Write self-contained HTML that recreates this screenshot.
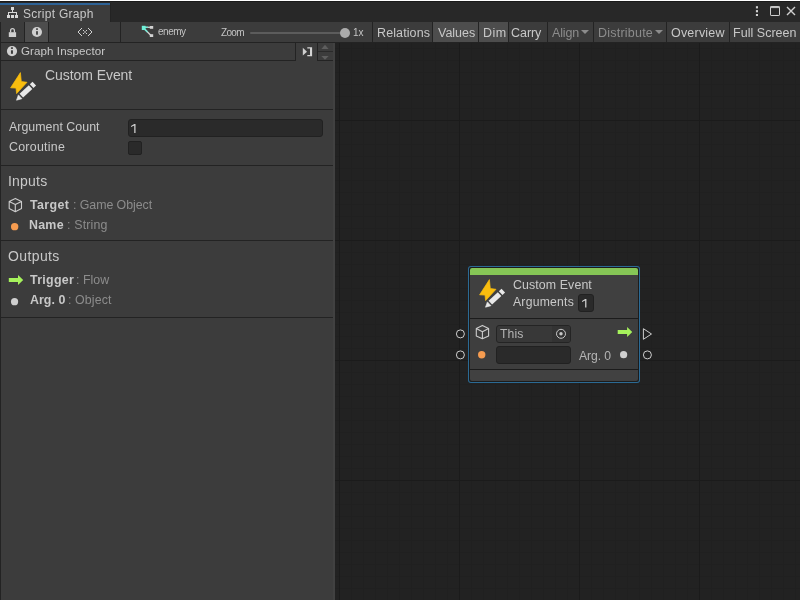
<!DOCTYPE html>
<html><head><meta charset="utf-8">
<style>
*{margin:0;padding:0;box-sizing:border-box}
html,body{width:800px;height:600px;overflow:hidden;background:#282828;font-family:"Liberation Sans",sans-serif;color:#c4c4c4}
.a{position:absolute}
.t{position:absolute;white-space:pre;line-height:1;font-family:"Liberation Sans",sans-serif;will-change:transform}
svg{position:absolute;overflow:visible}
</style></head><body>
<!-- top chrome -->
<div class="a" style="left:0;top:0;width:800px;height:1px;background:#fff"></div>
<div class="a" style="left:0;top:1px;width:800px;height:1px;background:#1a1a1a"></div>
<!-- tab -->
<div class="a" style="left:0;top:3px;width:110px;height:19px;background:#3c3c3c"></div>
<div class="a" style="left:0;top:3px;width:110px;height:2px;background:#2d6296"></div>
<div class="a" style="left:110px;top:3px;width:1px;height:19px;background:#232323"></div>
<svg style="left:0;top:0" width="24" height="22">
  <g fill="#d8d8d8">
    <rect x="11" y="7" width="3" height="3"/>
    <rect x="12" y="10" width="1" height="3"/>
    <rect x="8" y="12" width="9" height="1"/>
    <rect x="8" y="12" width="1" height="3"/>
    <rect x="16" y="12" width="1" height="3"/>
    <rect x="7" y="15" width="3" height="3"/>
    <rect x="11" y="15" width="3" height="3"/>
    <rect x="15" y="15" width="3" height="3"/>
  </g>
</svg>
<div class="t" id="tScript" style="left:22.50px;top:8px;font-size:12px;color:#c8c8c8;letter-spacing:0.273px">Script Graph</div>
<!-- window icons -->
<svg style="left:750px;top:0" width="50" height="22">
  <g fill="#d0d0d0">
    <rect x="5.9" y="6.2" width="2.1" height="2.2"/>
    <rect x="5.9" y="10.1" width="2.1" height="2.2"/>
    <rect x="5.9" y="14" width="2.1" height="2"/>
  </g>
  <rect x="20.5" y="6.5" width="9" height="9" rx="0.6" fill="none" stroke="#d0d0d0" stroke-width="1"/>
  <rect x="20.5" y="6.5" width="9" height="1.6" fill="#c0c0c0"/>
  <path d="M37 7 L45 15 M45 7 L37 15" stroke="#d0d0d0" stroke-width="1.4"/>
</svg>

<!-- toolbar -->
<div class="a" style="left:0;top:22px;width:800px;height:21px;background:#3c3c3c"></div>
<div class="a" style="left:0;top:42px;width:800px;height:1px;background:#232323"></div>
<div class="a" style="left:0;top:22px;width:1px;height:21px;background:#232323"></div>
<div class="a" style="left:24px;top:22px;width:1px;height:20px;background:#232323"></div>
<div class="a" style="left:25px;top:22px;width:23px;height:20px;background:#4d4d4d"></div>
<div class="a" style="left:48px;top:22px;width:1px;height:20px;background:#232323"></div>
<div class="a" style="left:120px;top:22px;width:1px;height:20px;background:#232323"></div>
<div class="a" style="left:372px;top:22px;width:1px;height:20px;background:#232323"></div>


<!-- toolbar icons -->
<svg style="left:0;top:22px" width="120" height="20">
  <path d="M10.6 10.4 V8.6 a1.9 1.9 0 0 1 3.8 0 V10.4" fill="none" stroke="#cfcfcf" stroke-width="1.3"/>
  <rect x="8.8" y="10.2" width="7.3" height="4.8" fill="#cfcfcf"/>
  <circle cx="36.95" cy="10" r="5.05" fill="#d0d0d0"/>
  <rect x="36.0" y="6.3" width="2" height="1.6" fill="#4d4d4d"/>
  <rect x="36.0" y="9.2" width="2" height="3.5" fill="#4d4d4d"/>
  <g fill="#d2d2d2"><rect x="81" y="6" width="1" height="1"/><rect x="80" y="7" width="1" height="1"/><rect x="79" y="8" width="1" height="1"/><rect x="78" y="9" width="1" height="1"/><rect x="78" y="10" width="1" height="1"/><rect x="79" y="11" width="1" height="1"/><rect x="80" y="12" width="1" height="1"/><rect x="81" y="13" width="1" height="1"/><rect x="88" y="6" width="1" height="1"/><rect x="89" y="7" width="1" height="1"/><rect x="90" y="8" width="1" height="1"/><rect x="91" y="9" width="1" height="1"/><rect x="91" y="10" width="1" height="1"/><rect x="90" y="11" width="1" height="1"/><rect x="89" y="12" width="1" height="1"/><rect x="88" y="13" width="1" height="1"/><rect x="83" y="8" width="1" height="1"/><rect x="86" y="8" width="1" height="1"/><rect x="83" y="11" width="1" height="1"/><rect x="86" y="11" width="1" height="1"/></g>
  <rect x="84.3" y="9.3" width="1.4" height="1.4" fill="#e0e0e0"/>
</svg>
<svg style="left:140px;top:22px" width="20" height="20">
  <path d="M4 5.3 H10" stroke="#cfcfcf" stroke-width="1.3"/>
  <path d="M4 5.3 H8" stroke="#6de8d2" stroke-width="1.3"/>
  <path d="M4.5 7 L11 13.5" stroke="#cfcfcf" stroke-width="1.4"/>
  <path d="M4.5 7 L7.5 10" stroke="#6de8d2" stroke-width="1.4"/>
  <rect x="1.8" y="3.8" width="3.8" height="4.2" fill="#6ff0d8"/>
  <rect x="9.8" y="4" width="3.4" height="2.8" fill="#d2d2d2"/>
  <rect x="9.8" y="12.2" width="3.4" height="2.8" fill="#d2d2d2"/>
</svg>
<div class="t" id="tEnemy" style="left:158.00px;top:27px;font-size:10px;color:#c4c4c4;letter-spacing:-0.475px">enemy</div>
<div class="t" id="tZoom" style="left:221.00px;top:28px;font-size:10px;color:#c4c4c4;letter-spacing:-0.667px">Zoom</div>
<div class="a" style="left:250px;top:32px;width:94px;height:2.4px;border-radius:2px;background:#5c5c5c"></div>
<div class="a" style="left:339.8px;top:28px;width:10px;height:10px;border-radius:50%;background:#ababab"></div>
<div class="t" id="t1x" style="left:353.00px;top:28px;font-size:10px;color:#c4c4c4;letter-spacing:0.000px">1x</div>
<!-- toolbar buttons right -->
<div class="a" style="left:433px;top:22px;width:45px;height:20px;background:#4d4d4d"></div>
<div class="a" style="left:479px;top:22px;width:29px;height:20px;background:#4d4d4d"></div>
<div class="a" style="left:432px;top:22px;width:1px;height:20px;background:#232323"></div>
<div class="a" style="left:478px;top:22px;width:1px;height:20px;background:#232323"></div>
<div class="a" style="left:508px;top:22px;width:1px;height:20px;background:#232323"></div>
<div class="a" style="left:547px;top:22px;width:1px;height:20px;background:#232323"></div>
<div class="a" style="left:593px;top:22px;width:1px;height:20px;background:#232323"></div>
<div class="a" style="left:666px;top:22px;width:1px;height:20px;background:#232323"></div>
<div class="a" style="left:729px;top:22px;width:1px;height:20px;background:#232323"></div>
<div class="t" id="tRel" style="left:376.80px;top:27px;font-size:12.5px;color:#c8c8c8;letter-spacing:0.111px">Relations</div>
<div class="t" id="tVal" style="left:438.10px;top:27px;font-size:12.5px;color:#c8c8c8;letter-spacing:-0.020px">Values</div>
<div class="t" id="tDim" style="left:483.00px;top:27px;font-size:12.5px;color:#c8c8c8;letter-spacing:0.500px">Dim</div>
<div class="t" id="tCarry" style="left:511.20px;top:27px;font-size:12.5px;color:#c8c8c8;letter-spacing:-0.050px">Carry</div>
<div class="t" id="tAlign" style="left:551.80px;top:27px;font-size:12.5px;color:#8c8c8c;letter-spacing:-0.150px">Align</div>
<svg style="left:580px;top:22px" width="10" height="20"><path d="M1 8 L9 8 L5 12 Z" fill="#8c8c8c"/></svg>
<div class="t" id="tDist" style="left:597.80px;top:27px;font-size:12.5px;color:#8c8c8c;letter-spacing:0.222px">Distribute</div>
<svg style="left:654px;top:22px" width="10" height="20"><path d="M1 8 L9 8 L5 12 Z" fill="#8c8c8c"/></svg>
<div class="t" id="tOver" style="left:670.90px;top:27px;font-size:12.5px;color:#c8c8c8;letter-spacing:0.199px">Overview</div>
<div class="t" id="tFull" style="left:732.80px;top:27px;font-size:12.5px;color:#c8c8c8;letter-spacing:0.030px">Full Screen</div>

<!-- graph area -->
<div class="a" id="graph" style="left:335px;top:43px;width:465px;height:557px;background-color:#222222;
background-image:linear-gradient(to right,#1b1b1b 1px,transparent 1px),linear-gradient(to bottom,#1b1b1b 1px,transparent 1px),linear-gradient(to right,#202020 1px,transparent 1px),linear-gradient(to bottom,#202020 1px,transparent 1px);
background-size:120px 120px,120px 120px,12px 12px,12px 12px;
background-position:4px 0,0 77px,4px 0,0 5px;overflow:hidden">
</div>

<!-- inspector panel -->
<div class="a" style="left:0;top:43px;width:335px;height:557px;background:#3c3c3c"></div>
<div class="a" style="left:0;top:43px;width:1px;height:557px;background:#232323"></div>


<!-- inspector header -->
<div class="a" style="left:1px;top:60px;width:295px;height:1px;background:#232323"></div><div class="a" style="left:317px;top:60px;width:16px;height:1px;background:#232323"></div>
<div class="a" style="left:295px;top:43px;width:1px;height:17px;background:#232323"></div>
<div class="a" style="left:317px;top:43px;width:1px;height:18px;background:#232323"></div>
<svg style="left:0;top:43px" width="20" height="17">
  <circle cx="12" cy="8.05" r="5.1" fill="#d0d0d0"/>
  <rect x="10.95" y="4.3" width="2" height="1.6" fill="#3c3c3c"/>
  <rect x="10.95" y="7.3" width="2" height="3.5" fill="#3c3c3c"/>
</svg>
<div class="t" id="tGI" style="left:20.50px;top:45px;font-size:11.6px;color:#c8c8c8;letter-spacing:0.071px">Graph Inspector</div>
<svg style="left:296px;top:43px" width="40" height="17">
  <path d="M6.8 4.8 L11 8.7 L6.8 12.6 Z" fill="#d0d0d0"/>
  <path d="M11.3 4.2 H16.1 V13.3 H11.3 V12 H14 V5.4 H11.3 Z" fill="#d4d4d4"/>
  <path d="M25.4 6 L29 1.8 L32.6 6 Z" fill="#5e5e5e"/>
  <path d="M25.4 12.9 L29 16.8 L32.6 12.9 Z" fill="#5e5e5e"/>
  <rect x="22" y="8" width="15" height="1" fill="#2a2a2a"/>
</svg>
<div class="a" style="left:333px;top:43px;width:2px;height:557px;background:#414141"></div>

<!-- Custom event header -->
<svg style="left:5px;top:67px" width="36" height="38">
  <path d="M15.4 5.6 L5.6 20.8 L11 21.1 L11.6 26.6 L22 15.3 L16.3 14.5 Z" fill="#f9bd0e" stroke="#f9bd0e" stroke-width="0.7" stroke-linejoin="round"/>
  <g transform="translate(11.3,33.4) rotate(-43)" fill="#e8e8e8">
    <path d="M0.3 0 L5.3 -2.6 L5.3 2.6 Z" stroke="#e8e8e8" stroke-width="0.6" stroke-linejoin="round"/>
    <rect x="6.9" y="-2.6" width="12.6" height="5.2"/>
    <rect x="21" y="-2.6" width="3.6" height="5.2"/>
  </g>
</svg>
<div class="t" id="tCEi" style="left:44.80px;top:68px;font-size:14px;color:#c8c8c8;letter-spacing:-0.064px">Custom Event</div>
<div class="a" style="left:1px;top:109px;width:332px;height:1px;background:#232323"></div>

<!-- fields -->
<div class="t" id="tAC" style="left:9.20px;top:121px;font-size:12.4px;color:#c8c8c8;letter-spacing:0.023px">Argument Count</div>
<div class="t" id="tCor" style="left:9.20px;top:141px;font-size:12.4px;color:#c8c8c8;letter-spacing:0.263px">Coroutine</div>
<div class="a" style="left:128px;top:119px;width:195px;height:18px;border-radius:3px;background:#2a2a2a;border:1px solid #212121"></div>
<svg style="left:130.00px;top:123.00px" width="6.5" height="11.1"><path d="M4.25 1 H5.50 V10.10 H4.25 V2.6 L1 4.10 V3.00 Z" fill="#d2d2d2"/></svg>
<div class="a" style="left:128px;top:141px;width:14px;height:14px;border-radius:2px;background:#2a2a2a;border:1px solid #212121"></div>
<div class="a" style="left:1px;top:165px;width:332px;height:1px;background:#232323"></div>

<!-- inputs -->
<div class="t" id="tIn" style="left:8.20px;top:174px;font-size:14px;color:#c8c8c8;letter-spacing:0.200px">Inputs</div>
<svg style="left:0;top:190px" width="30" height="30">
  <path d="M15.3 8.4 L21.5 11.5 V18.6 L15.3 21.7 L9.2 18.6 V11.5 Z M9.2 11.5 L15.3 14.6 L21.5 11.5 M15.3 14.6 V21.7" fill="none" stroke="#cdcdcd" stroke-width="1.1" stroke-linejoin="round"/>
</svg>
<div class="t" id="tTgt" style="left:30.00px;top:199px;font-size:12.4px;font-weight:bold;color:#c8c8c8;letter-spacing:0.400px">Target</div>
<div class="t" id="tGO" style="left:72.80px;top:199px;font-size:12.4px;color:#8c8c8c;letter-spacing:-0.067px">: Game Object</div>
<svg style="left:0;top:220px" width="30" height="14"><circle cx="14.65" cy="6.65" r="3.7" fill="#f69c50"/></svg>
<div class="t" id="tName" style="left:29.00px;top:219px;font-size:12.4px;font-weight:bold;color:#c8c8c8;letter-spacing:0.266px">Name</div>
<div class="t" id="tStr" style="left:66.80px;top:219px;font-size:12.4px;color:#8c8c8c;letter-spacing:0.171px">: String</div>
<div class="a" style="left:1px;top:240px;width:332px;height:1px;background:#232323"></div>

<!-- outputs -->
<div class="t" id="tOut" style="left:7.50px;top:249px;font-size:14px;color:#c8c8c8;letter-spacing:0.383px">Outputs</div>
<svg style="left:0;top:270px" width="30" height="20">
  <path d="M8.8 8 H18 V5 L23.2 9.95 L18 15 V12 H8.8 Z" fill="#a6f25c"/>
</svg>
<div class="t" id="tTrig" style="left:30.00px;top:274px;font-size:12.4px;font-weight:bold;color:#c8c8c8;letter-spacing:0.301px">Trigger</div>
<div class="t" id="tFlow" style="left:76.00px;top:274px;font-size:12.4px;color:#8c8c8c;letter-spacing:0.040px">: Flow</div>
<svg style="left:0;top:295px" width="30" height="14"><circle cx="14.55" cy="6.65" r="3.6" fill="#cfcfcf"/></svg>
<div class="t" id="tArg0B" style="left:30.00px;top:294px;font-size:12.4px;font-weight:bold;color:#c8c8c8;letter-spacing:0.040px">Arg. 0</div>
<div class="t" id="tObj" style="left:68.20px;top:294px;font-size:12.4px;color:#8c8c8c;letter-spacing:0.115px">: Object</div>
<div class="a" style="left:1px;top:317px;width:332px;height:1px;background:#232323"></div>


<!-- node -->
<div class="a" style="left:468px;top:266px;width:172px;height:117px;border-radius:3px;background:#2b6a94"></div>
<div class="a" style="left:469px;top:267px;width:170px;height:115px;border-radius:2px;background:#1c1c1c"></div>
<div class="a" style="left:470px;top:268px;width:168px;height:7px;border-radius:2px 2px 0 0;background:#86c656"></div>
<div class="a" style="left:470px;top:275px;width:168px;height:43px;background:#404040"></div>
<div class="a" style="left:470px;top:319px;width:168px;height:50px;background:#3e3e3e"></div>
<div class="a" style="left:470px;top:370px;width:168px;height:11px;border-radius:0 0 2px 2px;background:#414141"></div>
<svg style="left:474px;top:274px" width="36" height="38">
  <path d="M15.4 5.6 L5.6 20.8 L11 21.1 L11.6 26.6 L22 15.3 L16.3 14.5 Z" fill="#f9bd0e" stroke="#f9bd0e" stroke-width="0.7" stroke-linejoin="round"/>
  <g transform="translate(11.3,33.4) rotate(-43)" fill="#e8e8e8">
    <path d="M0.3 0 L5.3 -2.6 L5.3 2.6 Z" stroke="#e8e8e8" stroke-width="0.6" stroke-linejoin="round"/>
    <rect x="6.9" y="-2.6" width="12.6" height="5.2"/>
    <rect x="21" y="-2.6" width="3.6" height="5.2"/>
  </g>
</svg>
<div class="t" id="tCEn" style="left:512.50px;top:278.5px;font-size:12.4px;color:#c8c8c8;letter-spacing:0.09px">Custom Event</div>
<div class="t" id="tNArgs" style="left:512.50px;top:296px;font-size:12.2px;color:#c8c8c8;letter-spacing:0.226px">Arguments</div>
<div class="a" style="left:578px;top:294px;width:16px;height:18px;border-radius:3px;background:#2a2a2a;border:1px solid #212121"></div>
<svg style="left:580.60px;top:297.90px" width="6.4" height="10.4"><path d="M4.15 1 H5.40 V9.40 H4.15 V2.6 L1 4.10 V3.00 Z" fill="#d2d2d2"/></svg>
<!-- ports row 1 -->
<svg style="left:450px;top:320px" width="210" height="50">
  <circle cx="10.4" cy="13.9" r="4" fill="none" stroke="#cdcdcd" stroke-width="1"/>
  <circle cx="10.4" cy="34.9" r="4" fill="none" stroke="#cdcdcd" stroke-width="1"/>
  <path d="M193.4 8.7 L201.5 14 L193.4 19.3 Z" fill="none" stroke="#cdcdcd" stroke-width="1" stroke-linejoin="miter"/>
  <circle cx="197.4" cy="34.9" r="4" fill="none" stroke="#cdcdcd" stroke-width="1"/>
  <path d="M32.4 5.4 L38.6 8.6 V15.9 L32.4 18.8 L26.3 15.9 V8.6 Z M26.3 8.6 L32.4 11.8 L38.6 8.6 M32.4 11.8 V18.8" fill="none" stroke="#cdcdcd" stroke-width="1.1" stroke-linejoin="round"/>
  <circle cx="31.7" cy="34.7" r="3.7" fill="#f69c50"/>
  <path d="M167.7 10 H177.1 V6.9 L182.25 11.9 L177.1 17 V14 H167.7 Z" fill="#a6f25c"/>
  <circle cx="173.6" cy="34.7" r="3.6" fill="#cfcfcf"/>
</svg>
<div class="a" style="left:496px;top:325px;width:75px;height:17.5px;border-radius:3px;background:#383838;border:1px solid #242424"></div>
<div class="a" style="left:552px;top:326px;width:18px;height:15.5px;border-radius:0 2px 2px 0;background:#333333"></div>
<svg style="left:551px;top:326px" width="20" height="16">
  <circle cx="10" cy="7.8" r="4.5" fill="none" stroke="#c8c8c8" stroke-width="1"/>
  <circle cx="10" cy="7.8" r="1.7" fill="#c8c8c8"/>
</svg>
<div class="t" id="tThis" style="left:499.70px;top:328px;font-size:12.2px;color:#b4b4b4;letter-spacing:0.099px">This</div>
<div class="a" style="left:496px;top:346px;width:75px;height:18px;border-radius:3px;background:#2a2a2a;border:1px solid #212121"></div>
<div class="t" id="tArg0N" style="left:579.20px;top:350px;font-size:12.2px;color:#b4b4b4;letter-spacing:-0.080px">Arg. 0</div>

</body></html>
